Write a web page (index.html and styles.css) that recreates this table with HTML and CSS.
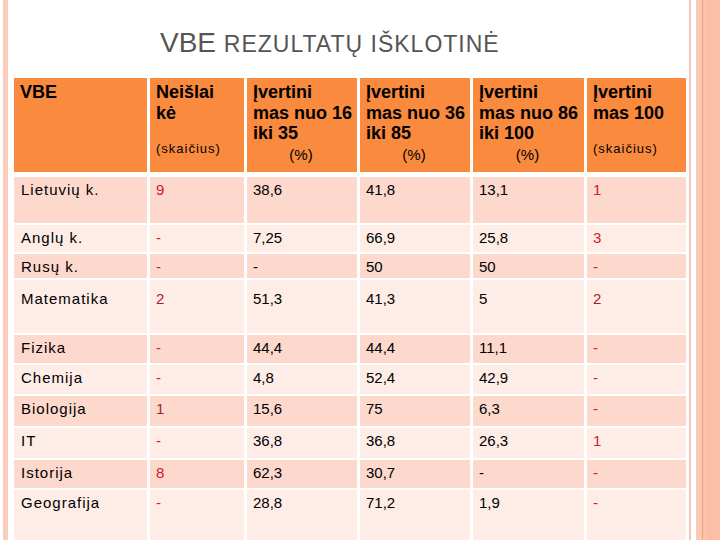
FILE: index.html
```html
<!DOCTYPE html>
<html lang="lt">
<head>
<meta charset="utf-8">
<title>VBE rezultatų išklotinė</title>
<link rel="stylesheet" href="styles.css">
</head>
<body>
<div class="slide">
  <div class="edge-left"></div>
  <div class="main">
    <h1 class="title">VBE <span class="title-sc">REZULTATŲ IŠKLOTINĖ</span></h1>
    <table class="results">
      <colgroup>
        <col class="c-subj"><col class="c-n"><col class="c-p"><col class="c-p"><col class="c-p2"><col class="c-last">
      </colgroup>
      <thead>
        <tr class="head">
          <th><div class="h-main">VBE</div></th>
          <th><div class="h-main">Neišlai<br>kė</div><div class="h-sub count">(skaičius)</div></th>
          <th><div class="h-main">Įvertini<br>mas nuo 16<br>iki 35</div><div class="h-sub pct">(%)</div></th>
          <th><div class="h-main">Įvertini<br>mas nuo 36<br>iki 85</div><div class="h-sub pct">(%)</div></th>
          <th><div class="h-main">Įvertini<br>mas nuo 86<br>iki 100</div><div class="h-sub pct">(%)</div></th>
          <th><div class="h-main">Įvertini<br>mas 100</div><div class="h-sub count">(skaičius)</div></th>
        </tr>
      </thead>
      <tbody>
        <tr class="r-46"><td class="subj">Lietuvių k.</td><td class="red">9</td><td>38,6</td><td>41,8</td><td>13,1</td><td class="red">1</td></tr>
        <tr class="r-27"><td class="subj">Anglų k.</td><td class="red">-</td><td>7,25</td><td>66,9</td><td>25,8</td><td class="red">3</td></tr>
        <tr class="r-24"><td class="subj">Rusų k.</td><td class="red">-</td><td>-</td><td>50</td><td>50</td><td class="red">-</td></tr>
        <tr class="r-53 low"><td class="subj">Matematika</td><td class="red dark">2</td><td>51,3</td><td>41,3</td><td>5</td><td class="red dark">2</td></tr>
        <tr class="r-28"><td class="subj">Fizika</td><td class="red">-</td><td>44,4</td><td>44,4</td><td>11,1</td><td class="red">-</td></tr>
        <tr class="r-29"><td class="subj">Chemija</td><td class="red">-</td><td>4,8</td><td>52,4</td><td>42,9</td><td class="red">-</td></tr>
        <tr class="r-30"><td class="subj">Biologija</td><td class="red dark">1</td><td>15,6</td><td>75</td><td>6,3</td><td class="red">-</td></tr>
        <tr class="r-30"><td class="subj">IT</td><td class="red">-</td><td>36,8</td><td>36,8</td><td>26,3</td><td class="red">1</td></tr>
        <tr class="r-28"><td class="subj">Istorija</td><td class="red">8</td><td>62,3</td><td>30,7</td><td>-</td><td class="red">-</td></tr>
        <tr class="r-54"><td class="subj">Geografija</td><td class="red">-</td><td>28,8</td><td>71,2</td><td>1,9</td><td class="red">-</td></tr>
      </tbody>
    </table>
  </div>
  <div class="edge-right"></div>
</div>
</body>
</html>
```
FILE: styles.css
```css
* { box-sizing: border-box; }

html, body {
  margin: 0;
  padding: 0;
  background: #ffffff;
}

body {
  width: 720px;
  height: 540px;
  overflow: hidden;
  font-family: "Liberation Sans", Arial, sans-serif;
}

.slide {
  display: flex;
  width: 720px;
  height: 540px;
  overflow: hidden;
}

.edge-left {
  flex: 0 0 5px;
  margin-left: 3px;
  background: #f9ccbc;
}

.main {
  flex: 0 0 681px;
  padding-left: 3px;
}

.edge-right {
  flex: 0 0 31px;
  background: linear-gradient(to right,
    #f3c6bb 0, #f3c6bb 2px,
    #ffffff 2px, #ffffff 7px,
    #fcc9b5 7px, #fcc9b5 13px,
    #ef9f80 13px, #ef9f80 14px,
    #fcc4ad 14px, #fcc4ad 18px,
    #fbbfa7 18px, #fbbfa7 31px);
}

.title {
  margin: 0;
  height: 76px;
  padding: 27px 0 0 149px;
  font-weight: normal;
  font-size: 28px;
  line-height: 32px;
  color: #555555;
  white-space: nowrap;
}

.title-sc {
  font-size: 23px;
  letter-spacing: 1px;
}

.results {
  width: 678px;
  table-layout: fixed;
  border-collapse: separate;
  border-spacing: 3px 2px;
  margin: 0;
}

.c-subj { width: 133px; }
.c-n { width: 94px; }
.c-p { width: 110px; }
.c-p2 { width: 111px; }
.c-last { width: 99px; }

.head th {
  height: 97px;
  background: #f98a3e;
  border-bottom: 3px solid #ffffff;
  vertical-align: top;
  text-align: left;
  padding: 4px 4px 0 6px;
  color: #000000;
}

.h-main {
  font-weight: bold;
  font-size: 18px;
  line-height: 20.5px;
  white-space: nowrap;
}

.h-sub {
  font-weight: normal;
  white-space: nowrap;
}

.h-sub.count {
  margin-top: 18px;
  font-size: 13px;
  line-height: 16px;
  letter-spacing: 1px;
}

.h-sub.pct {
  font-size: 15px;
  line-height: 22px;
  text-align: center;
  padding-right: 4px;
}

.results td {
  vertical-align: top;
  padding: 4px 4px 0 6px;
  font-size: 15px;
  line-height: 18px;
  color: #000000;
  white-space: nowrap;
}

.results tbody tr:nth-child(odd) td { background: #fdd8cd; }
.results tbody tr:nth-child(even) td { background: #feece6; }

.results td.subj {
  padding-left: 7px;
  letter-spacing: 1px;
}

.results td.red { color: #d0202a; }
.results td.red.dark { color: #a81e2a; }

.results tr.low td { padding-top: 10px; }

.r-24 td { height: 24px; }
.r-27 td { height: 27px; }
.r-28 td { height: 28px; }
.r-29 td { height: 29px; }
.r-30 td { height: 30px; }
.r-46 td { height: 46px; }
.r-53 td { height: 53px; }
.r-54 td { height: 54px; }
```
